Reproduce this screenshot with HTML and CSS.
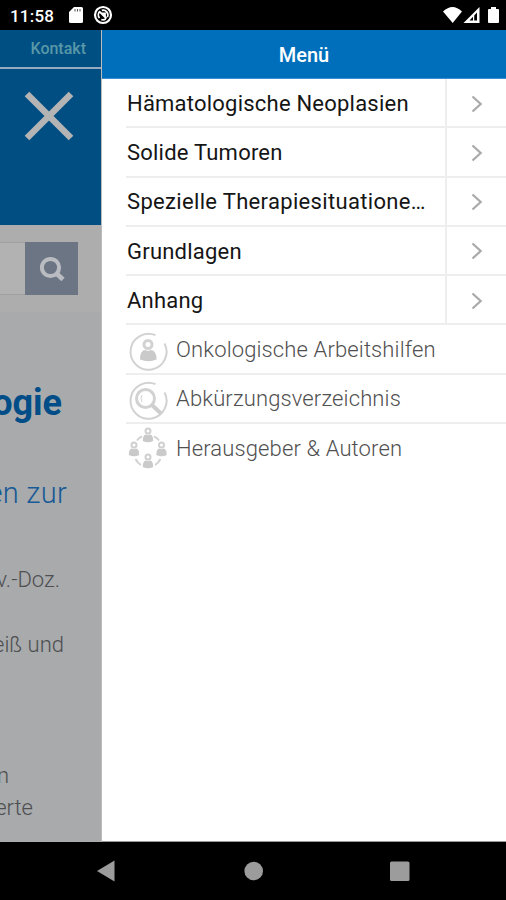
FILE: index.html
```html
<!DOCTYPE html>
<html lang="de">
<head>
<meta charset="utf-8">
<meta name="viewport" content="width=device-width">
<title>Menü</title>
<link rel="stylesheet" href="styles.css">
</head>
<body>
<header class="status">
  <span class="clock">11:58</span>
  <svg class="sd" width="14" height="16" viewBox="0 0 14 16"><path fill="#fff" d="M5 0h7.500a1.500 1.500 0 0 1 1.500 1.500v13a1.500 1.500 0 0 1-1.500 1.500h-11A1.500 1.500 0 0 1 0 14.500V5z"/><path stroke="#555" stroke-width="1" d="M6 2v2.500M8.500 2v2.500M11 2v2.500"/></svg>
  <svg class="sync" width="20" height="20" viewBox="0 0 20 20" fill="none" stroke="#fff"><circle cx="10" cy="10" r="8" stroke-width="2.200"/><path stroke-width="1.800" d="M6.500 13A4.800 4.800 0 0 1 7 6.300M8.800 5.300a4.800 4.800 0 0 1 5.500 6.800M12.600 14a4.800 4.800 0 0 1-4.300.5M7 7l6.500 6.500M9 8.300h3v3"/></svg>
  <svg class="signals" width="57" height="18" viewBox="0 0 57 18"><path fill="#fff" d="M0 5.500Q9.500-3.500 19 5.500L9.700 17zM36.500 1v16H20.500zM46 3h2V1h5v2h2q1 0 1 1v12q0 1-1 1h-9q-1 0-1-1V4q0-1 1-1z"/><path d="M34 6.500v8h-2.800v-5zM30 10.700v3.800h-3.500z"/></svg>
</header>
<main class="screen">
  <section class="page">
    <div class="topbar">Kontakt</div>
    <div class="banner"><svg width="50" height="50" viewBox="0 0 50 50"><path d="M3 3l44 44M47 3L3 47" stroke="#b4b4b4" stroke-width="6.500"/></svg></div>
    <div class="search">
      <div class="field"></div>
      <div class="find"><svg width="26" height="26" viewBox="0 0 26 26" fill="none" stroke="#b9bcc0"><circle cx="11.500" cy="11.500" r="8.600" stroke-width="4"/><path d="M17.500 17.500l6.500 6" stroke-width="4.800"/></svg></div>
    </div>
    <article class="article">
      <h1>ogie</h1>
      <h2>en zur</h2>
      <p class="authors">v.-Doz.</p>
      <p class="names">eiß und</p>
      <p class="body-a">n</p>
      <p class="body-b">erte</p>
    </article>
  </section>
  <nav class="menu">
    <div class="title">Menü</div>
    <ul>
      <li class="row"><span class="label">Hämatologische Neoplasien</span><span class="next"><svg width="12" height="18" viewBox="0 0 12 18"><path d="M1.500 1.500L9.700 9l-8.200 7.500"/></svg></span></li>
      <li class="row"><span class="label">Solide Tumoren</span><span class="next"><svg width="12" height="18" viewBox="0 0 12 18"><path d="M1.500 1.500L9.700 9l-8.200 7.500"/></svg></span></li>
      <li class="row"><span class="label long">Spezielle Therapiesituatione…</span><span class="next"><svg width="12" height="18" viewBox="0 0 12 18"><path d="M1.500 1.500L9.700 9l-8.200 7.500"/></svg></span></li>
      <li class="row"><span class="label">Grundlagen</span><span class="next"><svg width="12" height="18" viewBox="0 0 12 18"><path d="M1.500 1.500L9.700 9l-8.200 7.500"/></svg></span></li>
      <li class="row"><span class="label">Anhang</span><span class="next"><svg width="12" height="18" viewBox="0 0 12 18"><path d="M1.500 1.500L9.700 9l-8.200 7.500"/></svg></span></li>
      <li class="row tool"><svg class="icon" width="42" height="42" viewBox="0 0 42 42"><path class="ring" d="M28.500 4.200A18 18 0 1 0 37.500 12.500"/><circle cx="21" cy="13.500" r="4" class="ring thick"/><path class="solid" d="M13 28.500q0-9 5-9.500l3 1 3-1q5.500.5 5.500 9.500-8 3.500-16.500 0z"/></svg><span class="label">Onkologische Arbeitshilfen</span></li>
      <li class="row tool"><svg class="icon" width="42" height="42" viewBox="0 0 42 42"><path class="ring" d="M28.500 4.200A18 18 0 1 0 37.500 12.500"/><circle cx="18.500" cy="18.500" r="9" class="ring thick"/><path class="handle" d="M25 25l9 8.500"/><path class="ring fine" d="M15 15q-2 3 0 7"/></svg><span class="label">Abkürzungsverzeichnis</span></li>
      <li class="row tool last"><svg class="icon" width="42" height="42" viewBox="0 0 42 42"><defs><g id="person"><circle cy="-4" r="2.500" fill="none" stroke="#d0d0d0" stroke-width="2"/><path class="solid" d="M-5.200 6q0-6.500 3.200-6.500l2 .8 2-.8q3.200 0 3.200 6.500-5 2.500-10.400 0z"/></g></defs><path class="ring" d="M10 11.500q2-3 5-4M27 7.500q3 1 5 4M8.500 30q2 4 5.500 6M33.500 30q-2 4-5.500 6"/><use href="#person" x="21" y="6"/><use href="#person" x="7" y="20"/><use href="#person" x="34.500" y="20"/><use href="#person" x="21" y="32"/></svg><span class="label">Herausgeber &amp; Autoren</span></li>
    </ul>
  </nav>
</main>
<footer class="navigation">
  <svg width="506" height="58" viewBox="0 0 506 58" fill="#9c9c9c"><path d="M97 29l17.500-10.500v21z"/><circle cx="253.700" cy="29" r="9.300"/><rect x="390" y="19.500" width="19.500" height="19.500" rx="1.500"/></svg>
</footer>
</body>
</html>
```
FILE: styles.css
```css
* { box-sizing: border-box; }
body { margin: 0; width: 506px; height: 900px; overflow: hidden; background: #000; font-family: Roboto, "Liberation Sans", sans-serif; display: flex; flex-direction: column; }
svg { display: block; flex: none; overflow: visible; }
h1, h2, p, ul { margin: 0; padding: 0; }
.status { height: 30px; display: flex; align-items: center; padding-left: 10px; color: #fff; }
.clock { width: 59px; font-size: 17px; font-weight: 500; letter-spacing: .2px; padding-top: 2px; }
.sync { margin-left: 10px; }
.signals { margin-left: auto; margin-right: 6px; }
.screen { height: 812px; display: flex; }
.page { width: 102px; flex: none; overflow: hidden; background: #a8aaac; border-right: 1px solid #bbb; }
.topbar { height: 39px; background: #004f82; border-bottom: 2px solid #98aac0; color: #5898a8; font-size: 16px; font-weight: 500; line-height: 37px; text-align: right; padding-right: 15px; }
.banner { height: 156px; background: #004e82; padding: 22px 0 0 24px; }
.search { height: 87px; background: #adadad; padding-top: 17px; display: flex; }
.field { width: 25px; height: 53px; background: #b2b2b2; border: solid #a0a0a0; border-width: 1px 0; }
.find { width: 53px; height: 53px; background: #6c7584; display: flex; align-items: center; justify-content: center; }
.article { display: flex; flex-direction: column; align-items: flex-end; padding-top: 66px; white-space: nowrap; color: #4e4f51; font-size: 22px; }
.article h1 { font-size: 36px; line-height: 50px; color: #004d87; font-weight: 700; padding-right: 39px; }
.article h2 { font-size: 29px; line-height: 40px; font-weight: 300; color: #175a96; margin-top: 45px; padding-right: 34px; letter-spacing: .3px; }
.article p { line-height: 32px; font-weight: 300; }
.article .authors { margin-top: 51px; padding-right: 41px; }
.article .names { margin-top: 33px; padding-right: 37px; }
.article .body-a { margin-top: 99px; padding-right: 92px; }
.article .body-b { padding-right: 68px; }
.menu { flex: 1; min-width: 0; background: #fff; border-bottom: 1px solid #999; }
.title { height: 49px; background: #006fbb; border-bottom: 1px solid #3c8dce; color: #fff; font-size: 20px; font-weight: 500; line-height: 50px; text-align: center; }
.menu ul { list-style: none; padding: 0 0 0 24px; }
.row { height: 49.25px; border-bottom: 2px solid #eee; display: flex; align-items: center; }
.label { flex: 1; white-space: nowrap; color: #151515; font-size: 22px; letter-spacing: .22px; padding: 1.5px 0 0 1px; line-height: 45px; }
.long { letter-spacing: .33px; }
.next { width: 61px; align-self: stretch; border-left: 2px solid #eee; display: flex; align-items: center; padding: 2px 0 0 24px; }
.next path { fill: none; stroke: #a9a9a9; stroke-width: 2.2; }
.tool .label { font-weight: 300; color: #505050; letter-spacing: .13px; padding: 1.5px 0 0 7px; }
.last { border-color: transparent; }
.icon { margin: 6px 0 0 1px; }
.ring { fill: none; stroke: #d2d2d2; stroke-width: 2; }
.thick { stroke-width: 3; }
.fine { stroke-width: 1; }
.handle { stroke: #cecece; stroke-width: 4; }
.solid { fill: #cacaca; }
.navigation { height: 58px; background: #000; }
```
